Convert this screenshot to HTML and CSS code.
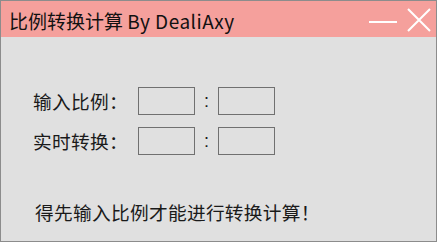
FILE: index.html
```html
<!DOCTYPE html>
<html lang="zh-CN">
<head>
<meta charset="utf-8">
<title>比例转换计算</title>
<link rel="stylesheet" href="styles.css">
</head>
<body>
<div class="window">
  <div class="titlebar">
    <div class="title">比例转换计算 <span class="latin">By DealiAxy</span></div>
    <div class="controls">
      <svg class="btn-min" width="28" height="4" viewBox="0 0 28 4"><line x1="0" y1="2" x2="28" y2="2" stroke="#fff" stroke-width="2"/></svg>
      <svg class="btn-close" width="24" height="24" viewBox="0 0 24 24"><path d="M1 1 L23 23 M23 1 L1 23" stroke="#fff" stroke-width="2" fill="none"/></svg>
    </div>
  </div>
  <div class="content">
    <div class="form">
      <div class="label">输入比例：</div>
      <div class="box"></div>
      <div class="colon">:</div>
      <div class="box"></div>
      <div class="label">实时转换：</div>
      <div class="box"></div>
      <div class="colon">:</div>
      <div class="box"></div>
    </div>
    <div class="message">得先输入比例才能进行转换计算！</div>
  </div>
</div>
</body>
</html>
```
FILE: styles.css
```css
html, body {
  margin: 0;
  padding: 0;
}
body {
  width: 437px;
  height: 242px;
  overflow: hidden;
  font-family: "Noto Sans CJK SC", "Noto Sans", sans-serif;
  color: #1a1a1a;
}
.window {
  box-sizing: border-box;
  width: 437px;
  height: 242px;
  border: 1px solid #8c8c8c;
  background: #e0e0e0;
  display: flex;
  flex-direction: column;
}
.titlebar {
  height: 36px;
  background: #f5a09c;
  display: flex;
  align-items: center;
  justify-content: space-between;
  flex-shrink: 0;
}
.title {
  font-size: 19px;
  line-height: 24px;
  padding-left: 8px;
  padding-top: 3px;
  color: #111;
}
.latin {
  letter-spacing: 0.5px;
}
.controls {
  display: flex;
  align-items: center;
  gap: 10px;
  padding-right: 5px;
}
.btn-min {
  display: block;
  margin-top: 6px;
}
.btn-close {
  display: block;
  margin-top: 2px;
}
.content {
  padding: 50px 0 0 32px;
}
.form {
  display: grid;
  grid-template-columns: 105px 57px 23px 57px;
  grid-auto-rows: 28px;
  row-gap: 12px;
  align-items: center;
}
.label {
  font-size: 18.7px;
  line-height: 24px;
  letter-spacing: 0.3px;
}
.box {
  box-sizing: border-box;
  height: 28px;
  border: 1px solid #707070;
}
.colon {
  font-size: 18px;
  line-height: 24px;
  text-align: center;
  font-family: "Liberation Sans", sans-serif;
}
.message {
  margin-top: 45px;
  padding-left: 2px;
  font-size: 18.7px;
  line-height: 24px;
  letter-spacing: 0.3px;
}
```
